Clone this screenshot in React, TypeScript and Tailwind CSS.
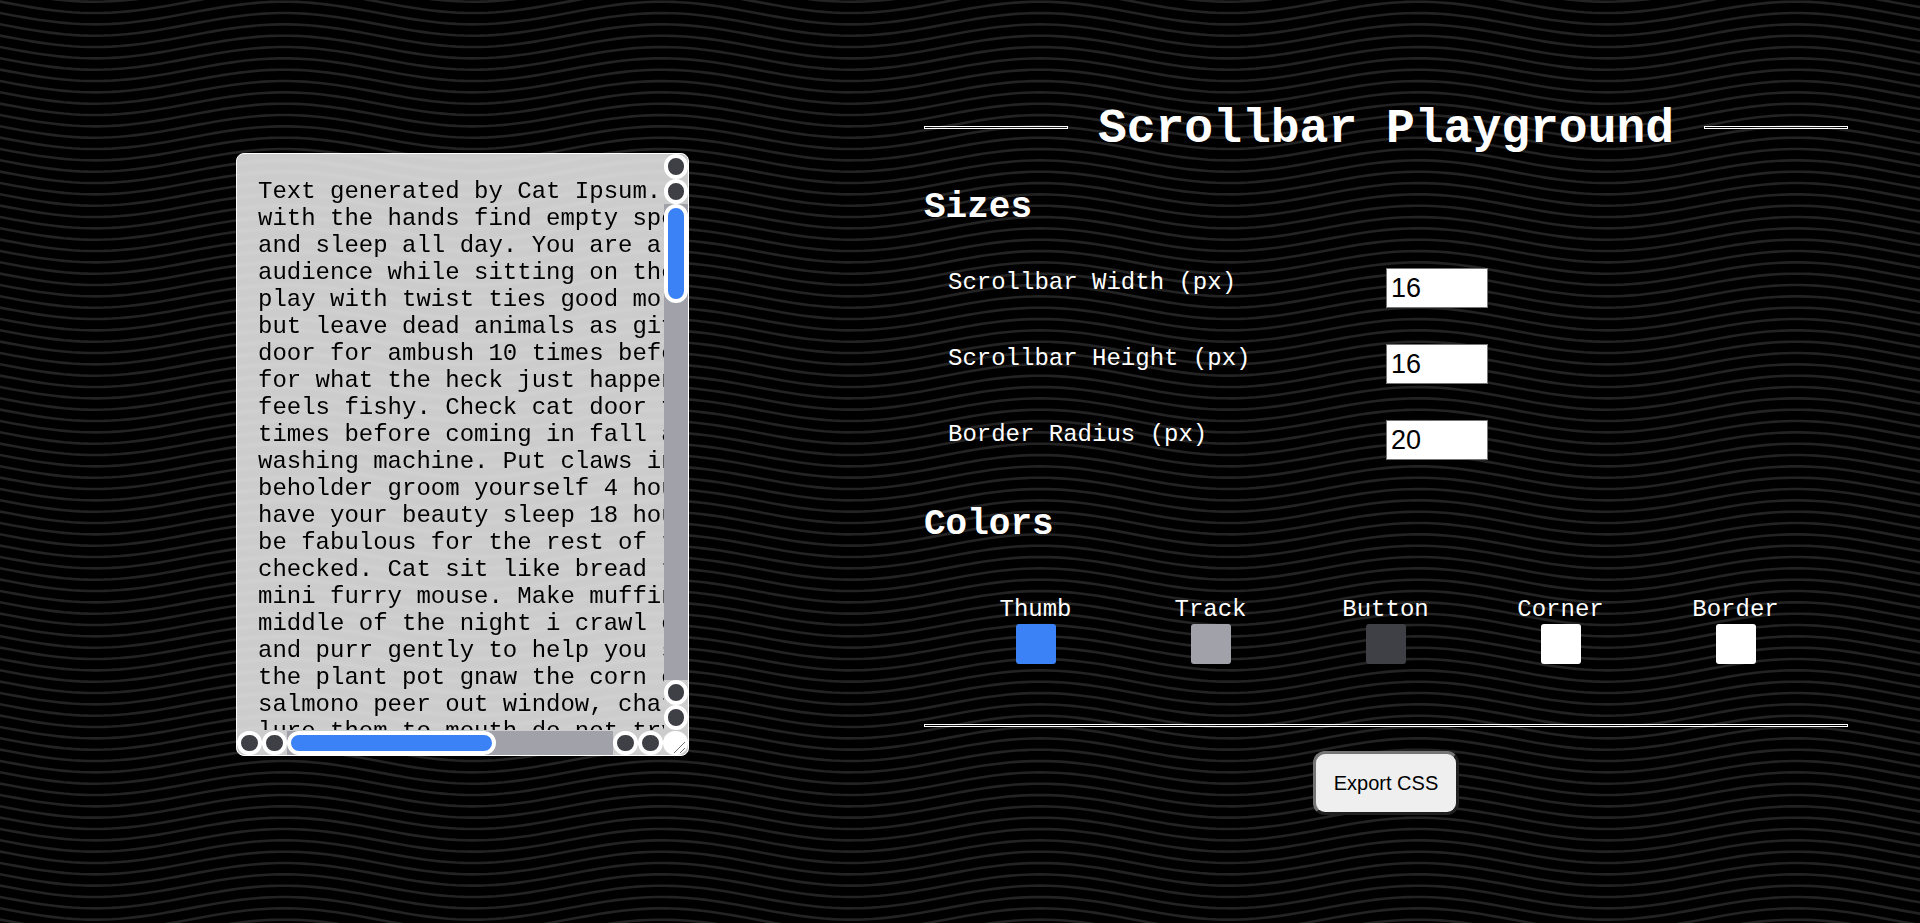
const LINES = [
  "Text generated by Cat Ipsum. Rub face on everything",
  "with the hands find empty spot in cupboard",
  "and sleep all day. You are a captive",
  "audience while sitting on the toilet, pet me",
  "play with twist ties good morning sunshine",
  "but leave dead animals as gifts. Stare at the",
  "door for ambush 10 times before coming in",
  "for what the heck just happened, something",
  "feels fishy. Check cat door for ambush 10",
  "times before coming in fall asleep on the",
  "washing machine. Put claws into leg, i am the",
  "beholder groom yourself 4 hours - checked,",
  "have your beauty sleep 18 hours - checked,",
  "be fabulous for the rest of the day -",
  "checked. Cat sit like bread toy mouse squeak",
  "mini furry mouse. Make muffins in the",
  "middle of the night i crawl onto your chest",
  "and purr gently to help you sleep. Dig in",
  "the plant pot gnaw the corn cob. Chase ball of",
  "salmono peer out window, chatter at birds,",
  "lure them to mouth do not try to pet me",
];

function wave(k: number) {
  const y0 = 1.7 + (k - 2) * 11.333;
  let d = "";
  for (let x = -8; x <= 1928; x += 8) {
    const y = y0 + 11.333 * Math.cos((2 * Math.PI * (x - 95)) / 378);
    d += (d ? "L" : "M") + x + " " + y.toFixed(2);
  }
  return d;
}
const WAVES = Array.from({ length: 88 }, (_, k) => wave(k));

const SIZES = [
  ["Scrollbar Width (px)", "16"],
  ["Scrollbar Height (px)", "16"],
  ["Border Radius (px)", "20"],
];
const COLORS = [
  ["Thumb", "bg-[#3b82f6]"],
  ["Track", "bg-[#a1a1aa]"],
  ["Button", "bg-[#3f3f46]"],
  ["Corner", "bg-white"],
  ["Border", "bg-white"],
];

function Rule({ className }: { className: string }) {
  return <div className={"h-[3px] border border-white " + className} />;
}

function ScrollButton({ vertical }: { vertical?: boolean }) {
  return (
    <div
      className={
        "shrink-0 rounded-full border-4 border-white bg-[#3f3f46] " +
        (vertical ? "h-[25px] w-[24px]" : "h-[24px] w-[25px]")
      }
    />
  );
}

export default function App() {
  return (
    <div className="relative h-[923px] w-full overflow-hidden bg-black font-['Liberation_Mono',monospace] text-white">
      <svg className="absolute inset-0 h-full w-full" viewBox="0 0 1920 923" aria-hidden="true">
        {WAVES.map((d, i) => (
          <path key={i} d={d} fill="none" stroke="#232323" strokeWidth="2.6" />
        ))}
      </svg>
      <div className="relative flex h-full">
        <div className="flex w-[924px] justify-center pt-[153px] pl-[1px]">
          <div className="flex h-[603px] w-[453px] flex-col overflow-hidden rounded-[8px] border border-white bg-white/80 text-black backdrop-blur-[1.5px]">
            <div className="flex h-[576px]">
              <div className="w-[427px] overflow-hidden px-[21px] pt-[24px] text-[24px] leading-[27px] whitespace-pre">
                {LINES.map((l, i) => (
                  <div key={i}>{l}</div>
                ))}
              </div>
              <div className="flex w-[24px] flex-col">
                <ScrollButton vertical />
                <ScrollButton vertical />
                <div className="flex-1 bg-[#a1a1aa]">
                  <div className="h-[99px] w-[24px] rounded-[20px] border-4 border-white bg-[#3b82f6]" />
                </div>
                <ScrollButton vertical />
                <ScrollButton vertical />
              </div>
            </div>
            <div className="flex h-[25px] items-end">
              <ScrollButton />
              <ScrollButton />
              <div className="h-[24px] flex-1 bg-[#a1a1aa]">
                <div className="h-[24px] w-[209px] rounded-[20px] border-4 border-white bg-[#3b82f6]" />
              </div>
              <ScrollButton />
              <ScrollButton />
              <div className="h-[24px] w-[25px] shrink-0 rounded-full bg-white">
                <svg viewBox="0 0 24 24" className="h-[24px] w-[24px]" aria-hidden="true">
                  <path d="M22 11 11 22M22 17l-5 5" stroke="#6f6f6f" strokeWidth="1" fill="none" />
                </svg>
              </div>
            </div>
          </div>
        </div>
        <div className="flex w-[924px] flex-col pt-[96px]">
          <div className="flex h-[64px] items-start">
            <Rule className="mt-[30px] flex-1" />
            <h1 className="mx-[30px] text-[48px] leading-[66px] font-bold">Scrollbar Playground</h1>
            <Rule className="mt-[30px] flex-1" />
          </div>
          <h2 className="mt-[26px] h-[44px] text-[36px] leading-[44px] font-bold">Sizes</h2>
          <div className="mt-[38px] flex flex-col gap-[36px] pl-[24px]">
            {SIZES.map(([label, value]) => (
              <div key={label} className="flex h-[40px] items-start">
                <label className="w-[438px] text-[24px] leading-[30px]">{label}</label>
                <input
                  readOnly
                  value={value}
                  className="h-[40px] w-[102px] border border-[#767676] bg-white px-[4px] font-['Liberation_Sans',sans-serif] text-[27px] text-black outline-none"
                />
              </div>
            ))}
          </div>
          <h2 className="mt-[43px] h-[44px] text-[36px] leading-[44px] font-bold">Colors</h2>
          <div className="mt-[49px] flex pl-[24px]">
            {COLORS.map(([label, bg]) => (
              <div key={label} className="flex w-[175px] flex-col items-center">
                <span className="h-[28px] text-[24px] leading-[28px]">{label}</span>
                <span className={"block h-[40px] w-[40px] rounded-[3px] " + bg} />
              </div>
            ))}
          </div>
          <Rule className="mt-[60px]" />
          <div className="mt-[24px] flex pl-[389px]">
            <button className="h-[64px] w-[146px] rounded-[12px] border-[3px] border-[#767676] bg-[#efefef] font-['Liberation_Sans',sans-serif] text-[20px] text-black [border-style:outset]">
              Export CSS
            </button>
          </div>
        </div>
      </div>
    </div>
  );
}
